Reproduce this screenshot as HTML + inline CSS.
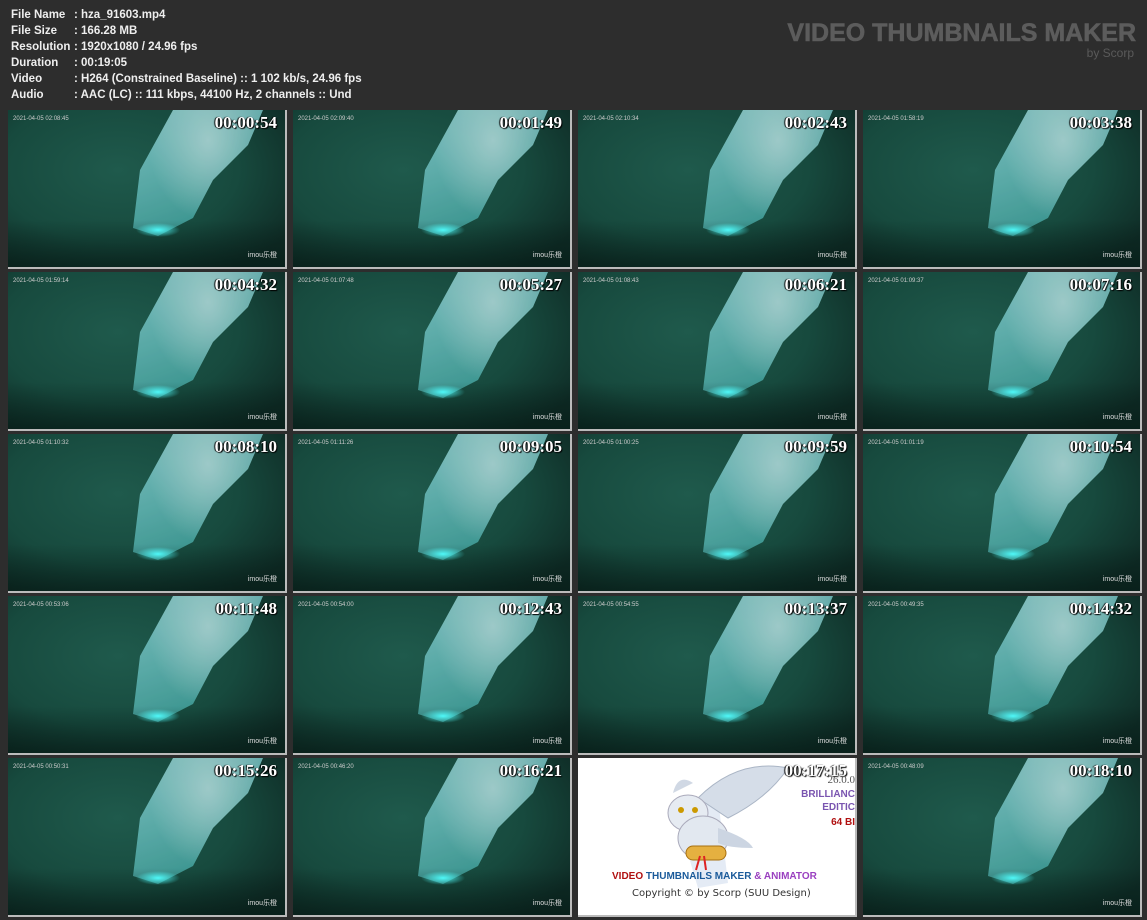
<!DOCTYPE html>
<html><head><meta charset="utf-8"><style>
html,body{margin:0;padding:0;background:#2d2d2d;width:1147px;height:920px;overflow:hidden;position:relative;font-family:"Liberation Sans",sans-serif}
.info{position:absolute;left:11px;top:7px;color:#eee;font-weight:bold;font-size:11.5px;line-height:16px}
.info div span{display:inline-block;width:63px}
.logo{position:absolute;right:11px;top:20px;color:#5c5c5c;font-family:"Liberation Sans",sans-serif;font-weight:bold;font-size:25px;text-align:right;line-height:27px;-webkit-text-stroke:0.6px #5c5c5c}
.logo small{display:block;font-weight:normal;font-size:12px;line-height:12px;color:#5a5a5a;margin-right:2px;-webkit-text-stroke:0}
.t{position:absolute;width:277px;height:157px;overflow:hidden;border-right:2px solid #bbb;border-bottom:2px solid #bbb;
background:radial-gradient(ellipse 200px 120px at 110px 60px, #1f5a4c, #174a3e 60%, #0f2c26 100%);}
.t::before{content:"";position:absolute;left:0;top:0;width:277px;height:157px;
background:radial-gradient(ellipse 60px 80px at 200px 30px,#bfe9ea,rgba(0,0,0,0) 100%),linear-gradient(160deg,#a8e0e2 0%,#7ccacc 35%,#48aaa6 70%,#2c8a80 100%);
clip-path:polygon(165px 0,255px 0,240px 35px,205px 70px,185px 108px,150px 126px,125px 118px,132px 60px);
opacity:.8}
.t::after{content:"";position:absolute;left:0;top:0;width:277px;height:157px;
background:radial-gradient(ellipse 22px 7px at 150px 120px, rgba(80,255,255,.95), rgba(0,0,0,0)),
linear-gradient(180deg,rgba(0,0,0,0) 70%,rgba(5,25,20,.6) 100%);}
.t>div{z-index:2}
.t .d{position:absolute;left:5px;top:6px;font-size:6px;color:#ccc}
.t .w{position:absolute;right:8px;bottom:7px;font-size:7px;color:#ddd;font-family:"Liberation Sans","Noto Sans CJK SC",sans-serif}
.t .ts{position:absolute;right:8px;top:3px;font-family:"Liberation Serif",serif;font-weight:bold;font-size:17px;color:#fff;text-shadow:1px 1px 1px #000,-1px 0 1px #000}
.t.a{background:#fff}
.t.a::before,.t.a::after{display:none}
.a .v{position:absolute;left:34px;top:113px;font-size:10px;font-weight:bold;color:#1a5a9a;white-space:nowrap}
.a .c{position:absolute;left:54px;top:130px;font-size:10px;color:#333;font-family:"DejaVu Sans",sans-serif;white-space:nowrap}
.a .e{position:absolute;right:0;font-weight:bold;font-size:10px;text-align:right;white-space:nowrap}
</style></head><body>
<div class="info">
<div><span>File Name</span>: hza_91603.mp4</div>
<div><span>File Size</span>: 166.28 MB</div>
<div><span>Resolution</span>: 1920x1080 / 24.96 fps</div>
<div><span>Duration</span>: 00:19:05</div>
<div><span>Video</span>: H264 (Constrained Baseline) :: 1 102 kb/s, 24.96 fps</div>
<div><span>Audio</span>: AAC (LC) :: 111 kbps, 44100 Hz, 2 channels :: Und</div>
</div>
<div class="logo">VIDEO THUMBNAILS MAKER<small>by Scorp</small></div>

<div class="t" style="left:8px;top:110px"><div class="d">2021-04-05 02:08:45</div><div class="ts">00:00:54</div><div class="w">imou乐橙</div></div>
<div class="t" style="left:293px;top:110px"><div class="d">2021-04-05 02:09:40</div><div class="ts">00:01:49</div><div class="w">imou乐橙</div></div>
<div class="t" style="left:578px;top:110px"><div class="d">2021-04-05 02:10:34</div><div class="ts">00:02:43</div><div class="w">imou乐橙</div></div>
<div class="t" style="left:863px;top:110px"><div class="d">2021-04-05 01:58:19</div><div class="ts">00:03:38</div><div class="w">imou乐橙</div></div>

<div class="t" style="left:8px;top:272px"><div class="d">2021-04-05 01:59:14</div><div class="ts">00:04:32</div><div class="w">imou乐橙</div></div>
<div class="t" style="left:293px;top:272px"><div class="d">2021-04-05 01:07:48</div><div class="ts">00:05:27</div><div class="w">imou乐橙</div></div>
<div class="t" style="left:578px;top:272px"><div class="d">2021-04-05 01:08:43</div><div class="ts">00:06:21</div><div class="w">imou乐橙</div></div>
<div class="t" style="left:863px;top:272px"><div class="d">2021-04-05 01:09:37</div><div class="ts">00:07:16</div><div class="w">imou乐橙</div></div>

<div class="t" style="left:8px;top:434px"><div class="d">2021-04-05 01:10:32</div><div class="ts">00:08:10</div><div class="w">imou乐橙</div></div>
<div class="t" style="left:293px;top:434px"><div class="d">2021-04-05 01:11:26</div><div class="ts">00:09:05</div><div class="w">imou乐橙</div></div>
<div class="t" style="left:578px;top:434px"><div class="d">2021-04-05 01:00:25</div><div class="ts">00:09:59</div><div class="w">imou乐橙</div></div>
<div class="t" style="left:863px;top:434px"><div class="d">2021-04-05 01:01:19</div><div class="ts">00:10:54</div><div class="w">imou乐橙</div></div>

<div class="t" style="left:8px;top:596px"><div class="d">2021-04-05 00:53:06</div><div class="ts">00:11:48</div><div class="w">imou乐橙</div></div>
<div class="t" style="left:293px;top:596px"><div class="d">2021-04-05 00:54:00</div><div class="ts">00:12:43</div><div class="w">imou乐橙</div></div>
<div class="t" style="left:578px;top:596px"><div class="d">2021-04-05 00:54:55</div><div class="ts">00:13:37</div><div class="w">imou乐橙</div></div>
<div class="t" style="left:863px;top:596px"><div class="d">2021-04-05 00:49:35</div><div class="ts">00:14:32</div><div class="w">imou乐橙</div></div>

<div class="t" style="left:8px;top:758px"><div class="d">2021-04-05 00:50:31</div><div class="ts">00:15:26</div><div class="w">imou乐橙</div></div>
<div class="t" style="left:293px;top:758px"><div class="d">2021-04-05 00:46:20</div><div class="ts">00:16:21</div><div class="w">imou乐橙</div></div>
<div class="t a" style="left:578px;top:758px">
<svg width="277" height="157" style="position:absolute;left:0;top:0">
<path d="M95 45 L120 130 L150 125 L140 40 Z" fill="#dde6f2" opacity=".8"/>
<path d="M120 40 Q160 0 210 10 Q190 40 150 60 Z" fill="#d5dde8" stroke="#aab5c5"/>
<ellipse cx="110" cy="55" rx="20" ry="18" fill="#e6ebf2" stroke="#aab"/>
<path d="M95 35 Q100 15 115 25 Z" fill="#d0d8e4"/>
<circle cx="103" cy="52" r="3" fill="#c90"/><circle cx="117" cy="52" r="3" fill="#c90"/>
<ellipse cx="125" cy="80" rx="25" ry="22" fill="#e2e8f0" stroke="#aab"/>
<path d="M140 70 Q170 80 175 90 Q150 90 140 85Z" fill="#ccd5e2"/>
<rect x="108" y="88" width="40" height="14" rx="7" fill="#e5b040" stroke="#a87010"/>
<path d="M122 98 L118 112 M126 98 L128 112" stroke="#d22" stroke-width="2"/>
</svg>
<div class="ts">00:17:15</div>
<div class="e" style="top:16px;color:#555;font-weight:normal;font-family:'Liberation Serif',serif;font-size:11px">26.0.0</div>
<div class="e" style="top:31px;color:#7a55b0">BRILLIANC</div>
<div class="e" style="top:44px;color:#7a55b0">EDITIC</div>
<div class="e" style="top:59px;color:#b01010">64 BI</div>
<div class="v"><span style="color:#b01010">VIDEO</span> THUMBNAILS MAKER <span style="color:#9a40c0">&amp; ANIMATOR</span></div>
<div class="c">Copyright © by Scorp (SUU Design)</div>
</div>
<div class="t" style="left:863px;top:758px"><div class="d">2021-04-05 00:48:09</div><div class="ts">00:18:10</div><div class="w">imou乐橙</div></div>
</body></html>
